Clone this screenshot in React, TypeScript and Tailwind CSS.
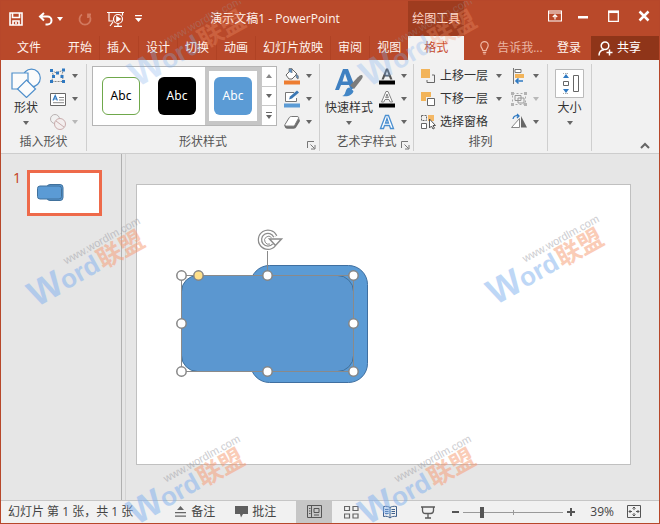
import type { ReactNode } from 'react'

const FONT = "font-['Open_Sans','Noto_Sans_CJK_SC',sans-serif]"

function Arrow({ light = false }: { light?: boolean }) {
  return (
    <svg width="6" height="4" viewBox="0 0 6 4" className="shrink-0" aria-hidden="true">
      <path d="M0 0h6L3 4z" fill={light ? '#b8b8b8' : '#666'} />
    </svg>
  )
}

function Watermark({ place }: { place: string }) {
  return (
    <svg width="150" height="110" viewBox="-20 -95 150 110" className={`pointer-events-none absolute z-20 overflow-visible ${place}`}>
      <g transform="rotate(-29)" fontFamily="'Liberation Sans','Noto Sans CJK SC',sans-serif">
        <text x="-1" y="0" fontSize="36" fontWeight="bold" fill="#7fb0ee">W</text>
        <text x="33" y="-1" fontSize="26" fontWeight="bold" fill="#7fb0ee">ord</text>
        <text x="76" y="-1" fontSize="25" fontWeight="bold" fill="#f79a72">联盟</text>
        <text x="46" y="-23" fontSize="11" fill="#9a9aa2">www.wordlm.com</text>
      </g>
    </svg>
  )
}

/* ---------- title bar and tabs ---------- */

const TABS = ['开始', '插入', '设计', '切换', '动画', '幻灯片放映', '审阅', '视图']

function QuickAccess() {
  return (
    <div className="flex h-full items-center text-white">
      <button aria-label="保存" className="ml-2">
        <svg width="14" height="14" viewBox="0 0 14 14" fill="none" stroke="currentColor" strokeWidth="1.6">
          <path d="M1 1h12v12H1z" />
          <path d="M3.500 1v4.500h7V1M4 13V9h6v4M7 10v2" />
        </svg>
      </button>
      <button aria-label="撤消" className="ml-[15px] flex items-center gap-1">
        <svg width="15" height="14" viewBox="0 0 15 14" fill="none" stroke="currentColor" strokeWidth="2">
          <path d="M6 1L2 4.500L6 8.500M2 4.500h7.500a4 4 0 0 1 0 8H7.500" />
        </svg>
        <svg width="6" height="4" viewBox="0 0 6 4"><path d="M0 0h6L3 4z" fill="currentColor" /></svg>
      </button>
      <button aria-label="重复" className="ml-[15px] text-[#d2795f]">
        <svg width="14" height="14" viewBox="0 0 14 14" fill="none" stroke="currentColor" strokeWidth="1.800">
          <path d="M4 2.500a5.500 5.500 0 1 0 6 0M10 6V2.500h3" />
        </svg>
      </button>
      <button aria-label="从头开始放映" className="ml-[15px]">
        <svg width="18" height="16" viewBox="0 0 18 16" fill="none" stroke="currentColor" strokeWidth="1.200">
          <path d="M0 1.500h17M2 1.500v8.500h4M15.500 1.500v3M3 15l3-4" />
          <circle cx="11" cy="8" r="4.500" />
          <path d="M9.800 5.800v4.400l3.400-2.200z" fill="currentColor" />
          <path d="M7 15.300h8M11 12.500v3" />
        </svg>
      </button>
      <button aria-label="自定义快速访问工具栏" className="ml-[10px]">
        <svg width="7" height="7" viewBox="0 0 7 7" fill="currentColor"><path d="M0 0h7v1.200H0zM0 3h7L3.500 7z" /></svg>
      </button>
    </div>
  )
}

function Header() {
  return (
    <header className="grid grid-cols-[auto_56px_1fr] grid-rows-[35px_24px] bg-[#b9492a] text-xs text-[#fff4ee]">
      <div className="flex items-center">
        <div className="h-[30px]"><QuickAccess /></div>
        <h1 className="flex-1 pt-px text-center text-xs whitespace-nowrap">演示文稿1 - PowerPoint</h1>
      </div>
      <div className="flex items-center justify-center bg-[#9f3c1f] text-[#ffd9cb]">绘图工具</div>
      <div className="flex h-[30px] items-center justify-end gap-[15px] pr-[9px] text-white">
        <button aria-label="功能区显示选项">
          <svg width="14" height="12" viewBox="0 0 14 12" fill="none" stroke="currentColor">
            <path d="M.5 1h13v10H.5zM.5 3h13M7 9.500V5M4.800 7L7 4.800L9.200 7" strokeWidth="1.200" />
          </svg>
        </button>
        <button aria-label="最小化">
          <svg width="12" height="12" viewBox="0 0 12 12"><path d="M1 6h10v2.500H1z" fill="currentColor" /></svg>
        </button>
        <button aria-label="最大化" className="ml-1">
          <svg width="11" height="12" viewBox="0 0 11 12" fill="none" stroke="currentColor"><path d="M.7 1.500h9.600v9.800H.7z" strokeWidth="1.300" /><path d="M0 1.800h11" strokeWidth="2.500" /></svg>
        </button>
        <button aria-label="关闭" className="ml-1">
          <svg width="12" height="12" viewBox="0 0 12 12" fill="none" stroke="currentColor" strokeWidth="2.500"><path d="M1.500 1.500l9 9M10.500 1.500l-9 9" /></svg>
        </button>
      </div>
      <nav className="flex" aria-label="功能区选项卡">
        <button className="pr-5 pl-4">文件</button>
        {TABS.map((t) => (
          <button key={t} className="border-r border-[#b04224] px-[7px] last:border-r-0">{t}</button>
        ))}
      </nav>
      <button className="bg-[#f4f2f1] text-[#c8482a]">格式</button>
      <div className="flex items-center">
        <label className="ml-4 flex min-w-0 flex-1 items-center gap-2">
          <svg width="9" height="14" viewBox="0 0 9 14" fill="none" stroke="#f0b8a5" className="shrink-0" strokeWidth="1.200" aria-hidden="true">
            <path d="M2.800 9.500C2.800 7.500.8 7 .8 4.300a3.700 3.700 0 0 1 7.400 0C8.200 7 6.200 7.500 6.200 9.500zM2.800 11.300h3.400M3.300 13h2.400" />
          </svg>
          <input aria-label="告诉我" placeholder="告诉我..." className="w-full min-w-0 bg-transparent outline-none placeholder:text-[#eab5a3]" />
        </label>
        <button className="mr-[10px]">登录</button>
        <button className="flex h-full items-center gap-1 bg-[#8f3519] pr-[18px] pl-[7px] text-white">
          <svg width="15" height="15" viewBox="0 0 15 15" fill="none" stroke="currentColor" strokeWidth="1.500" aria-hidden="true">
            <circle cx="7" cy="4.800" r="3.800" />
            <path d="M1 14.500c0-3.500 2-5.500 5-5.800M8.500 11.500h6M11.500 8.500v6" />
          </svg>
          共享
        </button>
      </div>
    </header>
  )
}

/* ---------- ribbon ---------- */

function Group({ label, launcher = false, children }: { label: string; launcher?: boolean; children: ReactNode }) {
  return (
    <section aria-label={label} className="mt-1 mb-[2px] flex shrink-0 flex-col border-r border-[#cfcfcf]">
      <div className="flex h-[69px]">{children}</div>
      <div className="relative flex h-[18px] items-center justify-center text-[#555]">
        {label}
        {launcher && (
          <button aria-label={`${label}设置`} className="absolute right-[3px] bottom-px">
            <svg width="9" height="9" viewBox="0 0 9 9" fill="none" stroke="#777"><path d="M.5 7V.5H7M3.500 3.500L7.500 7.500M8 4v4H4" /></svg>
          </button>
        )}
      </div>
    </section>
  )
}

function SmallButton({ label, light, children }: { label: string; light?: boolean; children: ReactNode }) {
  return (
    <button aria-label={label} className="flex h-[23px] items-center gap-[5px]">
      <svg width="18" height="18" viewBox="0 0 18 18" fill="none" aria-hidden="true">{children}</svg>
      <Arrow light={light} />
    </button>
  )
}

function BigButton({ label, icon }: { label: string; icon: ReactNode }) {
  return (
    <button className="flex flex-col items-center px-px pt-[2px] leading-4 text-[#333]">
      <span className="flex h-[34px] items-center">{icon}</span>
      <span>{label}</span>
      <span className="flex h-[14px] items-center"><Arrow /></span>
    </button>
  )
}

function Gallery() {
  const cell = 'flex w-14 items-center justify-center'
  const card = "flex size-[38px] items-center justify-center rounded-md font-['Noto_Sans',sans-serif]"
  return (
    <div className="mt-[2px] flex h-[60px] border border-[#b5b5b5] bg-white">
      <button className={cell}><span className={`${card} border border-[#6fa84b] text-black`}>Abc</span></button>
      <button className={cell}><span className={`${card} bg-black text-white`}>Abc</span></button>
      <button className={`${cell} border-4 border-[#c6c6c6]`}><span className={`${card} shrink-0 bg-[#5b9bd5] text-white`}>Abc</span></button>
      <div className="flex w-[15px] flex-col border-l border-[#c8c8c8]">
        <button aria-label="上一行" className="flex flex-1 items-center justify-center border-b border-[#c8c8c8]">
          <svg width="6" height="4" viewBox="0 0 6 4"><path d="M0 4h6L3 0z" fill="#888" /></svg>
        </button>
        <button aria-label="下一行" className="flex flex-1 items-center justify-center border-b border-[#c8c8c8]"><Arrow /></button>
        <button aria-label="其他" className="flex flex-1 items-center justify-center">
          <svg width="6" height="7" viewBox="0 0 6 7" fill="#666"><path d="M0 0h6v1H0zM0 3h6L3 7z" /></svg>
        </button>
      </div>
    </div>
  )
}

function Ribbon() {
  return (
    <div className="flex border-b border-[#cdcdcd] bg-[#f1f1f1] text-xs">
      <Group label="插入形状">
        <div className="flex pr-2 pl-1">
          <div className="w-[44px]">
            <BigButton
              label="形状"
              icon={
                <svg width="30" height="30" viewBox="0 0 30 30" fill="#fbfbfb" stroke="#4f8fcb" strokeWidth="1.200" className="mx-[5px]">
                  <circle cx="20.500" cy="10" r="8.800" />
                  <path d="M1 5h16v16H1z" />
                  <path d="M15.500 12l9 9-9 8.500-9-8.500z" />
                </svg>
              }
            />
          </div>
          <div>
            <SmallButton label="编辑形状">
              <path d="M2.500 3.500l5 2.500 7-3-2 5.500 2.500 6H2.500l2-6z" stroke="#888" strokeDasharray="2 1" />
              <path d="M1 2h3v3H1zM7 4.500h3v3H7zM13 1.500h3v3h-3zM3 8h3v3H3zM1 13h3v3H1zM13 13h3v3h-3zM11.500 8h3v3h-3z" fill="#2f79c1" />
            </SmallButton>
            <SmallButton label="文本框">
              <path d="M1.500 3.500h15v12h-15z" stroke="#666" fill="#fff" />
              <path d="M4 10.500L6.200 5.500L8.400 10.500M4.700 9h3" stroke="#2f79c1" strokeWidth="1.200" />
              <path d="M10 7.500h5M10 10h5M4 12.700h11" stroke="#888" />
            </SmallButton>
            <SmallButton label="合并形状" light>
              <circle cx="6" cy="6" r="4.500" stroke="#b9b3b3" />
              <circle cx="11" cy="11" r="5.500" stroke="#c9acac" fill="#f3eeee" />
              <path d="M7 8l8 6" stroke="#c9acac" />
            </SmallButton>
          </div>
        </div>
      </Group>

      <Group label="形状样式" launcher>
        <div className="flex gap-[6px] pr-[7px] pl-[5px]">
          <Gallery />
          <div>
            <SmallButton label="形状填充">
              <path d="M3 8l6-6 5 5-5 5H6z" fill="#fff" stroke="#666" />
              <path d="M6 5V1.500h3V6M13 7c2 1 3 2.500 2 5-2-1-2-3-2-5z" fill="#5b8fc5" stroke="#777" strokeWidth=".8" />
              <path d="M1 13.500h16v4H1z" fill="#ed7d31" />
            </SmallButton>
            <SmallButton label="形状轮廓">
              <path d="M11 2.500H2.500v9h11V8" stroke="#777" fill="#fff" />
              <path d="M6 9.500l1-3 7-6 2 2-7 6z" fill="#3c78b4" />
              <path d="M1 13.500h16v4H1z" fill="#5b9bd5" />
            </SmallButton>
            <SmallButton label="形状效果">
              <path d="M2 11.500L6 5c.6-1 1.200-1.500 2.300-1.500H14c1.500 0 2 .8 1.400 2L12 11.800c-.5 1-1.200 1.300-2.200 1.300H3.200c-1.400 0-1.900-.6-1.200-1.600z" fill="#fff" stroke="#777" />
              <path d="M1.500 12c0 2.500 1 3.800 3 3.800h6c1.500 0 2.300-.8 3-2L17 8l-1-3-4 7c-.5 1-1.200 1.300-2.200 1.300H3.600z" fill="#6f6f6f" />
            </SmallButton>
          </div>
        </div>
      </Group>

      <Group label="艺术字样式" launcher>
        <div className="flex gap-1 pr-[6px] pl-1">
          <BigButton
            label="快速样式"
            icon={
              <svg width="30" height="32" viewBox="0 0 30 32">
                <path d="M1 23L9 2h5l7 18-4 3-2-5H7l-2 5zM8.500 14.500h5.300L11 6.500z" fill="#3f80c1" fillRule="evenodd" />
                <path d="M28 8c1.500 1 .5 3-1 5l-7 9-4-3.500 7.500-8C25 9 26.500 7.500 28 8z" fill="#7c7c7c" />
                <path d="M15.500 20.500l4 3.500c-1 4-5 6-11.500 5 3-.8 3-3 4-5.500.7-2 2-2.800 3.500-3z" fill="#4286c6" />
              </svg>
            }
          />
          <div>
            <SmallButton label="文本填充">
              <path d="M3.500 12.500L8 1.500h2l4.500 11h-2.300L11 9.500H7l-1.200 3zM7.700 7.700h2.700L9 4z" fill="#555" fillRule="evenodd" />
              <path d="M1 13.500h16v4H1z" fill="#000" />
            </SmallButton>
            <SmallButton label="文本轮廓">
              <path d="M3.500 12L8 1.500h2l4.500 10.500h-2.300L11 9.500H7L5.800 12zM7.700 7.700h2.700L9 4z" fill="#fff" stroke="#777" fillRule="evenodd" strokeWidth=".9" />
              <path d="M1 13.500h16v4H1z" fill="#000" />
            </SmallButton>
            <SmallButton label="文本效果">
              <path d="M2.500 15.500L7.500 2.500h3l5 13h-3L11.500 12.500h-5l-1 3zM7.500 10h3L9 5.500z" fill="#fff" stroke="#4a8fd0" fillRule="evenodd" strokeWidth="1.300" />
            </SmallButton>
          </div>
        </div>
      </Group>

      <Group label="排列">
        <div className="flex gap-2 pr-2 pl-[6px] text-[#333]">
          <div>
            <button className="flex h-[23px] w-full items-center gap-1">
              <svg width="16" height="16" viewBox="0 0 16 16" aria-hidden="true">
                <path d="M1 1h9v9H1z" fill="#f2b45a" /><path d="M12 7h2.500v7.500H7V12" fill="none" stroke="#666" />
              </svg>
              上移一层<span className="ml-1"><Arrow /></span>
            </button>
            <button className="flex h-[23px] w-full items-center gap-1">
              <svg width="16" height="16" viewBox="0 0 16 16" aria-hidden="true">
                <path d="M1 1h10v5H6v4H1z" fill="#f2b45a" /><path d="M7.500 7.500h7v7h-7z" fill="#fff" stroke="#666" />
              </svg>
              下移一层<span className="ml-1"><Arrow /></span>
            </button>
            <button className="flex h-[23px] w-full items-center gap-1">
              <svg width="16" height="16" viewBox="0 0 16 16" fill="none" stroke="#666" aria-hidden="true">
                <path d="M1.500 9.500h5v5h-5z" fill="#fff" /><path d="M1.500 1.500h5v5h-5z" strokeDasharray="2 1" />
                <path d="M8 1h6v6H8z" fill="#f4b866" stroke="none" />
                <path d="M9.500 5v9l2-2 1.500 3 1.500-.8-1.500-2.700h2.500z" fill="#fff" stroke="#555" />
              </svg>
              选择窗格
            </button>
          </div>
          <div>
            <SmallButton label="对齐">
              <path d="M3.500 1v16" stroke="#777" />
              <path d="M5 2.500h6v3H5z" fill="#fff" stroke="#777" />
              <path d="M5 7h9v4H5z" fill="#f2b45a" />
              <path d="M13 14H6M8.500 11.500L6 14l2.500 2.500" stroke="#2f79c1" strokeWidth="1.600" />
            </SmallButton>
            <SmallButton label="组合" light>
              <path d="M2.500 3.500h13v11h-13z" stroke="#aaa" strokeDasharray="2 2" />
              <path d="M5 5.500h6v5H5zM8 8h6v5H8z" stroke="#999" />
              <path d="M1 2h3v3H1zM14 2h3v3h-3zM1 13h3v3H1zM14 13h3v3h-3z" fill="#b3b3b3" />
            </SmallButton>
            <SmallButton label="旋转">
              <path d="M1.500 14.500h8v-9z" fill="#fff" stroke="#888" />
              <path d="M11 3v11.500h6z" fill="#666" />
              <path d="M3 6c.5-3 3-4 5.500-3M7 1l2 2-2 2" stroke="#2f79c1" strokeWidth="1.300" />
            </SmallButton>
          </div>
        </div>
      </Group>

      <div className="mt-1 mb-[2px] flex w-[44px] shrink-0 justify-center border-r border-[#cfcfcf]">
        <BigButton
          label="大小"
          icon={
            <svg width="29" height="29" viewBox="0 0 29 29" fill="none">
              <path d="M.5.5h28v28H.5z" fill="#fff" stroke="#bbb" />
              <path d="M8 4.500h6M8 24.500h6M11 4v5M11 20v5" stroke="#aaa" strokeDasharray="1 1" />
              <path d="M11 5l3 4H8zM11 24l3-4H8z" fill="#2f79c1" />
              <path d="M8.500 12.500h5v4h-5zM18.500 6.500h5v16h-5z" stroke="#666" />
            </svg>
          }
        />
      </div>
      <div className="flex flex-1 items-end justify-end pr-[9px] pb-1">
        <button aria-label="折叠功能区">
          <svg width="10" height="7" viewBox="0 0 10 7" fill="none" stroke="#666" strokeWidth="2"><path d="M1 6l4-4 4 4" /></svg>
        </button>
      </div>
    </div>
  )
}

/* ---------- slide ---------- */

const HANDLES = [
  [44, 90], [130, 90], [216, 90],
  [44, 138], [216, 138],
  [44, 186], [130, 186], [216, 186],
]

function SlideShapes() {
  return (
    <svg width="260" height="220" viewBox="0 0 260 220" fill="none" role="img" aria-label="两个圆角矩形">
      <rect x="113.500" y="80.500" width="117" height="117" rx="19" fill="#5b9bd5" stroke="#3f6fa0" />
      <rect x="44.500" y="90.500" width="172" height="96" rx="16" fill="#5b97d0" stroke="#41719c" />
      <path d="M44.500 90.500h172v96h-172zM130.500 66v24" stroke="#8a8a8a" />
      <path d="M138.300 51.500A8 8 0 1 0 137 60" stroke="#8c8c8c" strokeWidth="4.500" />
      <path d="M138.300 51.500A8 8 0 1 0 137 60" stroke="#fff" strokeWidth="2" />
      <path d="M134.500 52.500A4 4 0 1 0 133 59" stroke="#8c8c8c" />
      <path d="M132.500 54h12l-6 6.500z" fill="#fff" stroke="#8c8c8c" strokeWidth="1.500" />
      {HANDLES.map(([x, y]) => (
        <circle key={`${x}-${y}`} cx={x + 0.5} cy={y + 0.5} r="4.700" fill="#fff" stroke="#858585" strokeWidth="1.500" />
      ))}
      <circle cx="61.500" cy="90.500" r="4.700" fill="#ffe08a" stroke="#858585" strokeWidth="1.500" />
    </svg>
  )
}

function Workspace() {
  return (
    <main className="flex min-h-0 flex-1 bg-[#e6e6e6]">
      <aside className="w-[121px] shrink-0 border-r border-[#b0b0b0] pt-4" aria-label="幻灯片缩略图">
        <button className="ml-3 flex items-start gap-[6px] text-sm leading-4 text-[#c43e1c]">
          <span>1</span>
          <span className="flex h-[46px] w-[75px] border-[3px] border-[#ee6a4a] bg-white">
            <svg width="69" height="40" viewBox="0 0 69 40" fill="#5b9bd5" stroke="#41719c">
              <rect x="17" y="11.500" width="16" height="16" rx="3" />
              <rect x="7.500" y="13" width="24" height="13" rx="2.500" />
            </svg>
          </span>
        </button>
      </aside>
      <div className="ml-[3px] flex flex-1 border-l border-[#d4d4d4] pt-[30px] pr-[28px] pb-[35px] pl-[10px]">
        <div className="flex-1 border border-[#c0c0c0] bg-white"><SlideShapes /></div>
      </div>
    </main>
  )
}

/* ---------- status bar ---------- */

function StatusBar() {
  return (
    <footer className="flex h-[23px] items-center border-t border-[#c6c6c6] bg-[#f1f1f1] text-xs whitespace-nowrap text-[#444]">
      <span className="pl-[7px]">幻灯片 第 1 张，共 1 张</span>
      <div className="ml-auto flex h-full items-center">
        <button className="flex items-center gap-1">
          <svg width="13" height="12" viewBox="0 0 13 12" fill="#666" aria-hidden="true"><path d="M6.500 0l3.500 4H3zM1 6h11v1.200H1zM1 9.500h11v1.200H1z" /></svg>
          备注
        </button>
        <button className="ml-5 flex items-center gap-1">
          <svg width="13" height="12" viewBox="0 0 13 12" fill="#5f5f5f" aria-hidden="true"><path d="M0 0h13v8H8l-2 3.500L5 8H0z" /></svg>
          批注
        </button>
        <button aria-label="普通视图" className="ml-5 flex h-full w-[36px] items-center justify-center bg-[#c6c6c6]">
          <svg width="15" height="14" viewBox="0 0 15 14" fill="none" stroke="#555"><path d="M.5.5h14v12H.5zM4.500.5v12M7 3.500h5v4H7zM7 10h5M2 3.500h1.500M2 6h1.500M2 8.500h1.500" /></svg>
        </button>
        <button aria-label="幻灯片浏览" className="ml-3">
          <svg width="15" height="13" viewBox="0 0 15 13" fill="none" stroke="#666"><path d="M.5.5h5v4h-5zM9 .5h5v4H9zM.5 8h5v4h-5zM9 8h5v4H9z" strokeWidth="1.200" /></svg>
        </button>
        <button aria-label="阅读视图" className="ml-6">
          <svg width="14" height="14" viewBox="0 0 14 14" fill="none" stroke="#3f608c"><path d="M.5 1.500c3-.5 5 0 6.500 1 1.500-1 3.500-1.500 6.500-1v10c-3-.5-5 0-6.500 1.500-1.500-1.500-3.500-2-6.500-1.500zM7 2v11M2 4.500h3.500M2 6.500h3.500M2 8.500h3.500M8.500 4.500H12M8.500 6.500H12M8.500 8.500H12" /></svg>
        </button>
        <button aria-label="幻灯片放映" className="ml-6">
          <svg width="14" height="13" viewBox="0 0 14 13" fill="none" stroke="#5a5a5a"><path d="M0 1h14M1.500 1v3.500c0 2 1 3 3 3h5c2 0 3-1 3-3V1M7 7.500v4M4 12h6" strokeWidth="1.300" /></svg>
        </button>
        <button aria-label="缩小" className="ml-[17px]">
          <svg width="7" height="8" viewBox="0 0 7 8"><path d="M0 3h7v2H0z" fill="#555" /></svg>
        </button>
        <div className="relative ml-1 flex h-full items-center">
          <span className="absolute left-[50px] h-[5px] w-px bg-[#999]" />
          <input
            type="range"
            aria-label="显示比例"
            defaultValue={17}
            className="relative h-[11px] w-[100px] appearance-none bg-transparent [&::-webkit-slider-runnable-track]:h-px [&::-webkit-slider-runnable-track]:bg-[#999] [&::-webkit-slider-thumb]:-mt-[5px] [&::-webkit-slider-thumb]:h-[11px] [&::-webkit-slider-thumb]:w-1 [&::-webkit-slider-thumb]:appearance-none [&::-webkit-slider-thumb]:bg-[#555]"
          />
        </div>
        <button aria-label="放大" className="ml-1">
          <svg width="8" height="8" viewBox="0 0 8 8"><path d="M0 3h3V0h2v3h3v2H5v3H3V5H0z" fill="#555" /></svg>
        </button>
        <button className="ml-[15px]">39%</button>
        <button aria-label="适应窗口" className="mr-[18px] ml-[13px]">
          <svg width="14" height="14" viewBox="0 0 14 14" fill="none" stroke="#555"><path d="M.5.5h13v12H.5zM7 2v3M7 8v3M2 6.500h3M9 6.500h3M5.500 3.500L7 2l1.500 1.500M5.500 9.500L7 11l1.500-1.500M3.500 5L2 6.500L3.500 8M10.500 5L12 6.500L10.500 8" /></svg>
        </button>
      </div>
    </footer>
  )
}

export default function App() {
  return (
    <div className={`relative flex h-screen flex-col overflow-hidden border border-[#b7472a] ${FONT}`}>
      <Header />
      <Ribbon />
      <Workspace />
      <StatusBar />
      <Watermark place="left-[117px] -top-[9px] opacity-30" />
      <Watermark place="left-[348px] -top-[9px] opacity-30" />
      <Watermark place="left-[16px] top-[211px] opacity-50" />
      <Watermark place="left-[475px] top-[209px] opacity-50" />
      <Watermark place="left-[116px] top-[429px] opacity-50" />
      <Watermark place="left-[347px] top-[429px] opacity-50" />
    </div>
  )
}
